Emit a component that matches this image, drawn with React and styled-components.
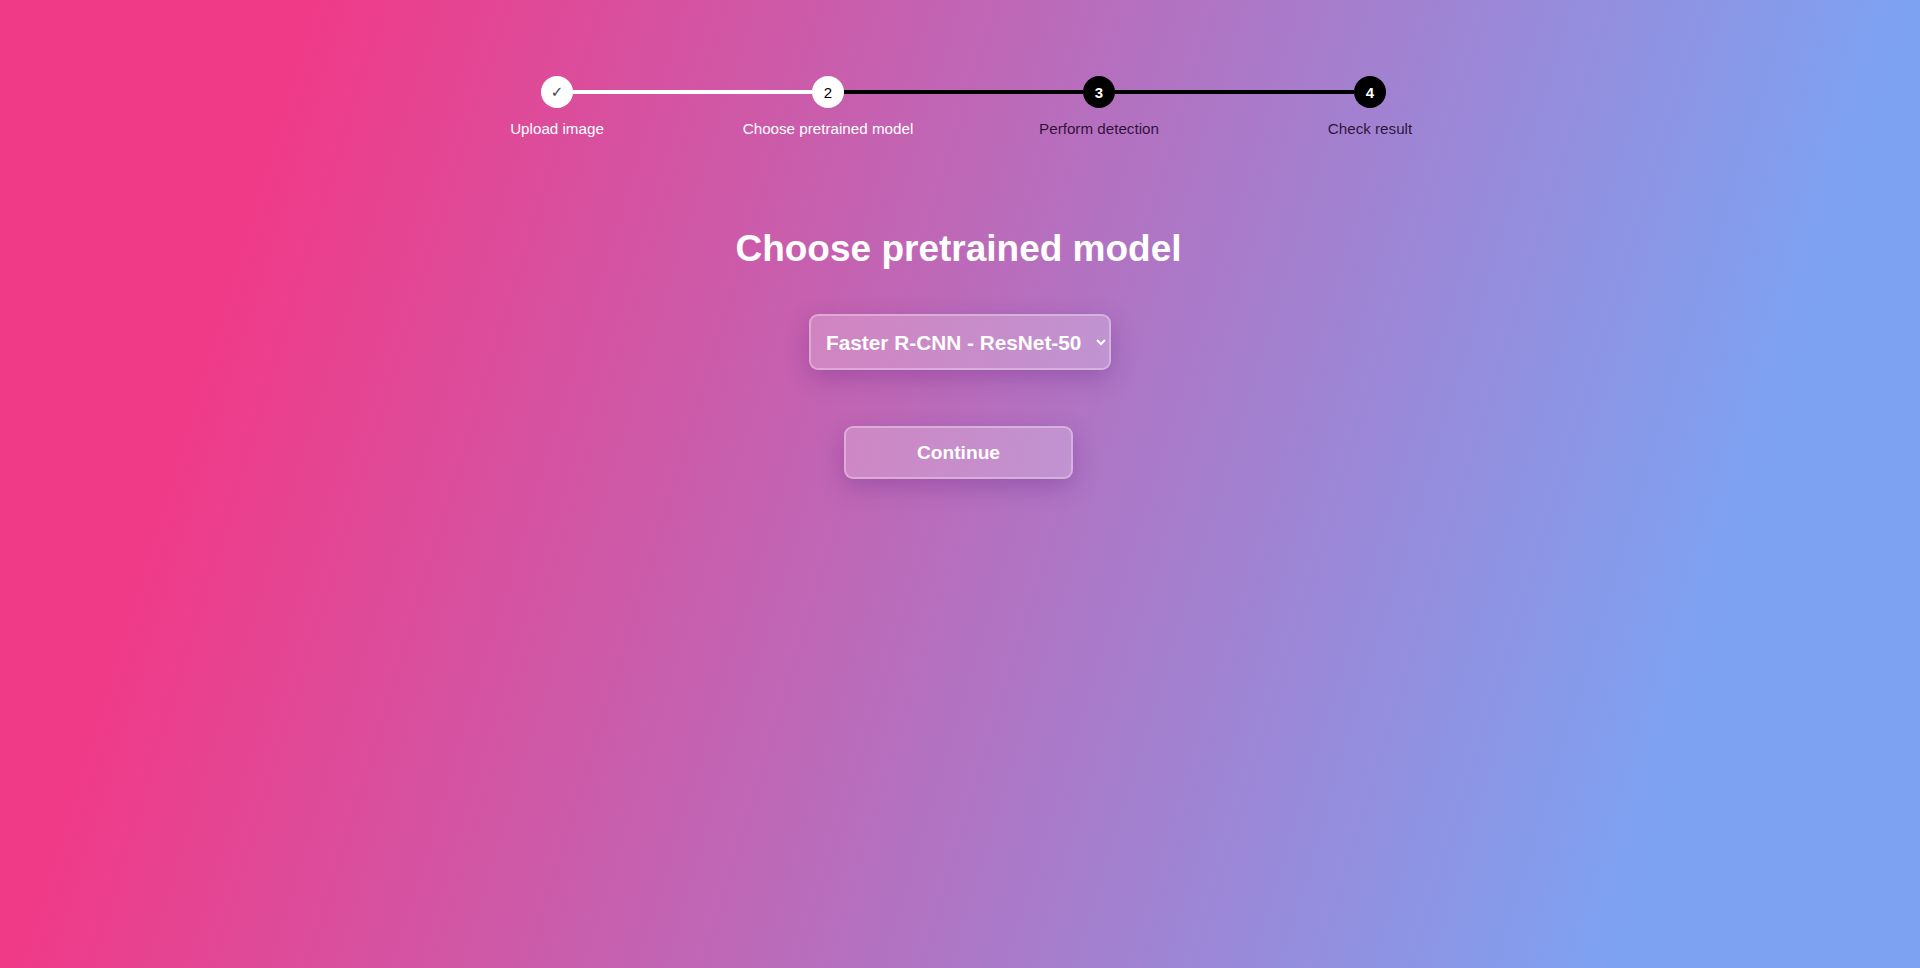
import React, { useState } from 'react';
import styled, { createGlobalStyle } from 'styled-components';

const GlobalStyle = createGlobalStyle`
  html, body {
    margin: 0;
    padding: 0;
  }
  body {
    font-family: "Liberation Sans", Arial, sans-serif;
  }
`;

const steps = ['Upload image', 'Choose pretrained model', 'Perform detection', 'Check result'];
const models = ['Faster R-CNN - ResNet-50', 'Faster R-CNN - MobileNet v3', 'RetinaNet - ResNet-50', 'SSD - VGG16'];

export default function App() {
  const [current] = useState(1);
  const [model, setModel] = useState(models[0]);

  return (
    <Page>
      <GlobalStyle />
      <Stepper>
        <Track>
          {steps.map((step, i) => (
            <React.Fragment key={step}>
              {i > 0 && <Bar done={i <= current} />}
              <Dot state={i < current ? 'done' : i === current ? 'active' : 'todo'}>
                {i < current ? '✓' : i + 1}
              </Dot>
            </React.Fragment>
          ))}
        </Track>
        <Labels>
          {steps.map((step, i) => (
            <Label key={step} reached={i <= current}>{step}</Label>
          ))}
        </Labels>
      </Stepper>

      <Content>
        <Title>Choose pretrained model</Title>
        <ModelSelect value={model} onChange={(e) => setModel(e.target.value)}>
          {models.map((m) => (
            <option key={m} value={m}>{m}</option>
          ))}
        </ModelSelect>
        <ContinueButton>Continue</ContinueButton>
      </Content>
    </Page>
  );
}

const Page = styled.div`
min-height: 100vh;
background: linear-gradient(107deg, #f03a88 14%, #7ea2f2 86%);
display: flex;
flex-direction: column;
align-items: center;
color: #fff;`;

const Stepper = styled.div`
width: 1091px;
padding: 76px 0 0 7px;
box-sizing: border-box;`;

const Track = styled.div`
display: flex;
align-items: center;
padding: 0 119.5px;`;

const Bar = styled.div`
flex: 1;
height: 4px;
background-color: ${(p) => (p.done ? '#ffffff' : '#000000')};`;

const Dot = styled.div`
width: 32px;
height: 32px;
border-radius: 50%;
flex-shrink: 0;
display: flex;
align-items: center;
justify-content: center;
font-size: 15px;
background-color: ${(p) => (p.state === 'todo' ? '#000000' : '#ffffff')};
color: ${(p) => (p.state === 'todo' ? '#ffffff' : p.state === 'done' ? '#444' : '#000')};
font-weight: ${(p) => (p.state === 'todo' ? 700 : 400)};
font-family: ${(p) => (p.state === 'done' ? '"DejaVu Sans", sans-serif' : '"Liberation Sans", Arial, sans-serif')};`;

const Labels = styled.div`
display: grid;
grid-template-columns: repeat(4, 1fr);
margin-top: 12px;`;

const Label = styled.div`
text-align: center;
font-size: 15.2px;
color: ${(p) => (p.reached ? '#ffffff' : 'rgba(20, 0, 30, 0.85)')};`;

const Content = styled.div`
display: flex;
flex-direction: column;
align-items: center;
margin-top: 91px;
margin-right: 3px;`;

const Title = styled.h1`
margin: 0;
font-size: 37px;
font-weight: 700;
color: #fff;`;

const ModelSelect = styled.select`
margin-top: 44px;
margin-left: 3px;
width: 302px;
height: 56px;
padding: 0 8px 0 11px;
font-family: "Liberation Sans", Arial, sans-serif;
font-size: 20.8px;
font-weight: 700;
color: #fff;
background-color: rgba(255, 255, 255, 0.22);
border: 2px solid rgba(255, 255, 255, 0.3);
border-radius: 9px;
box-shadow: 0 8px 24px rgba(90, 30, 130, 0.3);
outline: none;

option {
  color: #000;
}`;

const ContinueButton = styled.button`
margin-top: 56px;
width: 229px;
height: 53px;
font-family: "Liberation Sans", Arial, sans-serif;
font-size: 19.2px;
font-weight: 700;
color: #fff;
background-color: rgba(255, 255, 255, 0.22);
border: 2px solid rgba(255, 255, 255, 0.3);
border-radius: 9px;
box-shadow: 0 8px 24px rgba(90, 30, 130, 0.3);
cursor: pointer;`;
